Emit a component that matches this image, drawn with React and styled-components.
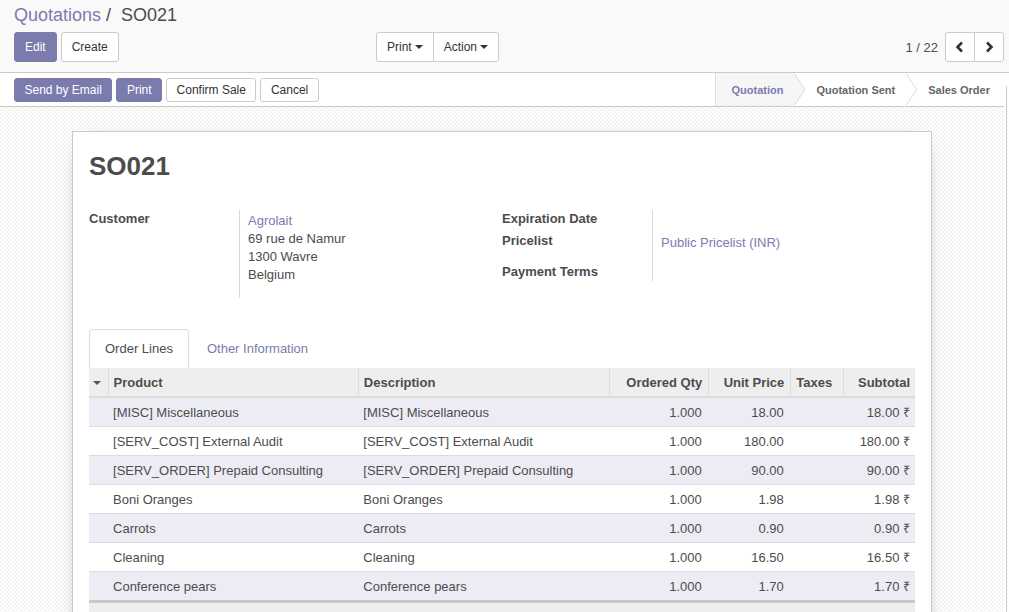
import React from "react";
import styled, { createGlobalStyle } from "styled-components";

const GlobalStyle = createGlobalStyle`
    html, body {
        margin: 0;
        padding: 0;
        height: 100%;
        overflow: hidden;
    }
    body {
        font-family: "Liberation Sans", Arial, sans-serif;
        font-size: 13px;
        color: #4c4c4c;
        background: #fff;
    }
`;

const purple = "#7c7bad";

const Page = styled.div`
    position: relative;
    height: 612px;
    display: flex;
    flex-direction: column;
`;

const ControlPanel = styled.div`
    background: #f9f9f9;
    border-bottom: 1px solid #cacaca;
    padding: 2px 5px 10px 14px;
    flex-shrink: 0;
`;

const Breadcrumb = styled.div`
    font-size: 18px;
    line-height: 26px;
    height: 28px;
    color: #4c4c4c;

    a {
        color: ${purple};
        text-decoration: none;
    }
`;

const ButtonRow = styled.div`
    display: flex;
    align-items: center;
    margin-top: 2px;
`;

const LeftButtons = styled.div`
    display: flex;
    gap: 4px;
    width: 362px;
`;

const Button = styled.button`
    font-family: inherit;
    font-size: 12px;
    height: ${(p) => (p.$small ? "24px" : "30px")};
    padding: ${(p) => (p.$small ? "0 9.5px" : "0 10px")};
    border-radius: 3px;
    border: 1px solid ${(p) => (p.$primary ? purple : "#ccc")};
    background: ${(p) => (p.$primary ? purple : "#fff")};
    color: ${(p) => (p.$primary ? "#fff" : "#333")};
    cursor: pointer;
    display: inline-flex;
    align-items: center;
    gap: 3px;
`;

const ButtonGroup = styled.div`
    display: flex;

    & > button {
        border-radius: 0;
    }
    & > button:first-child {
        border-radius: 3px 0 0 3px;
    }
    & > button:last-child {
        border-radius: 0 3px 3px 0;
        margin-left: -1px;
    }
`;

const Caret = styled.span`
    display: inline-block;
    width: 0;
    height: 0;
    border-left: 4px solid transparent;
    border-right: 4px solid transparent;
    border-top: 4px solid #333;
`;

const Pager = styled.div`
    margin-left: auto;
    display: flex;
    align-items: center;
    gap: 6px;
`;

const PagerValue = styled.span`
    font-size: 13px;
    color: #4c4c4c;
    margin-right: 1px;
`;

const PagerButton = styled(Button)`
    width: 30px;
    justify-content: center;
    padding: 0;
`;

const StatusBar = styled.div`
    display: flex;
    align-items: center;
    height: 33px;
    border-bottom: 1px solid #cacaca;
    padding-left: 14px;
    margin-right: 5px;
    flex-shrink: 0;
`;

const StatusButtons = styled.div`
    display: flex;
    gap: 4px;
`;

const StatusSteps = styled.div`
    margin-left: auto;
    display: flex;
    height: 100%;
    border-left: 1px solid #e0e0e0;
`;

const Step = styled.div`
    position: relative;
    display: flex;
    align-items: center;
    font-size: 11px;
    font-weight: bold;
    padding: 0 ${(p) => (p.$last ? "14px" : "11px")} 0 ${(p) => (p.$first ? "15px" : "22px")};
    color: ${(p) => (p.$active ? purple : "#666")};
    background: ${(p) => (p.$active ? "#f6f6f6" : "#fff")};

    ${(p) =>
        !p.$last &&
        `
    &::before, &::after {
        content: "";
        position: absolute;
        top: 0;
        height: 100%;
        width: 11px;
        clip-path: polygon(0 0, 100% 50%, 0 100%);
        z-index: 1;
    }
    &::before {
        right: -11px;
        background: #d8d8d8;
    }
    &::after {
        right: -10px;
        background: ${p.$active ? "#f6f6f6" : "#fff"};
    }
    `}
`;

const Content = styled.div`
    flex: 1;
    overflow: hidden;
    margin-right: 5px;
    background-color: #fff;
    background-image: repeating-conic-gradient(#f3f3f3 0 25%, #fff 0 50%);
    background-size: 4px 4px;
`;

const ScrollThumb = styled.div`
    position: absolute;
    right: 2px;
    top: 86px;
    bottom: 0;
    width: 1px;
    background: #c8c8c8;
`;

const Sheet = styled.div`
    width: 826px;
    margin: 24px auto 40px;
    background: #fff;
    border: 1px solid #c8c8d3;
    box-shadow: 0 5px 20px -15px #000;
    padding: 16px 16px 24px;
`;

const Title = styled.h1`
    margin: 0;
    font-size: 26px;
    line-height: 36px;
    font-weight: bold;
    color: #4c4c4c;
`;

const Groups = styled.div`
    display: grid;
    grid-template-columns: 1fr 1fr;
    margin-top: 26px;
`;

const FieldRow = styled.div`
    display: flex;
    min-height: ${(p) => p.$height || 20}px;
`;

const Label = styled.div`
    width: 150px;
    flex-shrink: 0;
    font-weight: bold;
    padding-top: ${(p) => p.$top || 0}px;
    line-height: 18px;
`;

const Value = styled.div`
    border-left: 1px solid #d8d8d8;
    padding: ${(p) => p.$top || 0}px 0 0 8px;
    line-height: 18px;
`;

const Link = styled.a`
    color: ${purple};
    text-decoration: none;
`;

const Tabs = styled.div`
    display: flex;
    margin-top: 31px;
    height: 39px;
`;

const Tab = styled.div`
    padding: 0 15px 1px;
    display: flex;
    align-items: center;
    border: 1px solid ${(p) => (p.$active ? "#ddd" : "transparent")};
    border-bottom: none;
    border-radius: 4px 4px 0 0;
    color: ${(p) => (p.$active ? "#4c4c4c" : purple)};
    margin-right: 2px;
`;

const Table = styled.table`
    width: 100%;
    border-collapse: collapse;
    table-layout: fixed;
`;

const Th = styled.th`
    background: #eee;
    height: 28px;
    padding: 0 6px 0 5px;
    text-align: ${(p) => (p.$right ? "right" : "left")};
    font-weight: bold;
    border-left: 1px solid #dcdcdc;
    border-bottom: 2px solid #dcdcdc;
    white-space: nowrap;

    &:first-child {
        border-left: none;
        padding: 0 4px;
    }
    &:last-child {
        padding-right: 5px;
    }
`;

const Tr = styled.tr`
    background: ${(p) => (p.$odd ? "#edecf5" : "#fff")};
    border-bottom: 1px solid #dcdcdc;
`;

const Td = styled.td`
    height: 28px;
    padding: 0 7px 0 5px;
    text-align: ${(p) => (p.$right ? "right" : "left")};
    white-space: nowrap;

    &:last-child {
        padding-right: 5px;
    }
`;

const FootRow = styled.tr`
    background: #eee;
    border-top: 3px solid #c8c8c8;
`;

const SortCaret = styled(Caret)`
    border-top-color: #555;
    vertical-align: middle;
`;

const lines = [
    ["[MISC] Miscellaneous", "1.000", "18.00", "18.00 ₹"],
    ["[SERV_COST] External Audit", "1.000", "180.00", "180.00 ₹"],
    ["[SERV_ORDER] Prepaid Consulting", "1.000", "90.00", "90.00 ₹"],
    ["Boni Oranges", "1.000", "1.98", "1.98 ₹"],
    ["Carrots", "1.000", "0.90", "0.90 ₹"],
    ["Cleaning", "1.000", "16.50", "16.50 ₹"],
    ["Conference pears", "1.000", "1.70", "1.70 ₹"],
];

const ChevronLeft = () => (
    <svg width="10" height="12" viewBox="0 0 10 12">
        <path d="M7 1.5 L2.5 6 L7 10.5" stroke="#333" strokeWidth="2.6" fill="none" />
    </svg>
);

const ChevronRight = () => (
    <svg width="10" height="12" viewBox="0 0 10 12">
        <path d="M3 1.5 L7.5 6 L3 10.5" stroke="#333" strokeWidth="2.6" fill="none" />
    </svg>
);

const App = () => {
    return (
        <Page>
            <GlobalStyle />
            <ControlPanel>
                <Breadcrumb>
                    <a href="#">Quotations</a> /&nbsp; SO021
                </Breadcrumb>
                <ButtonRow>
                    <LeftButtons>
                        <Button $primary>Edit</Button>
                        <Button>Create</Button>
                    </LeftButtons>
                    <ButtonGroup>
                        <Button>
                            Print <Caret />
                        </Button>
                        <Button>
                            Action <Caret />
                        </Button>
                    </ButtonGroup>
                    <Pager>
                        <PagerValue>1 / 22</PagerValue>
                        <ButtonGroup>
                            <PagerButton>
                                <ChevronLeft />
                            </PagerButton>
                            <PagerButton>
                                <ChevronRight />
                            </PagerButton>
                        </ButtonGroup>
                    </Pager>
                </ButtonRow>
            </ControlPanel>

            <StatusBar>
                <StatusButtons>
                    <Button $primary $small>Send by Email</Button>
                    <Button $primary $small>Print</Button>
                    <Button $small>Confirm Sale</Button>
                    <Button $small>Cancel</Button>
                </StatusButtons>
                <StatusSteps>
                    <Step $first $active>Quotation</Step>
                    <Step>Quotation Sent</Step>
                    <Step $last>Sales Order</Step>
                </StatusSteps>
            </StatusBar>

            <Content>
                <Sheet>
                    <Title>SO021</Title>
                    <Groups>
                        <div>
                            <FieldRow $height={88}>
                                <Label>Customer</Label>
                                <Value $top={2}>
                                    <Link href="#">Agrolait</Link>
                                    <br />
                                    69 rue de Namur
                                    <br />
                                    1300 Wavre
                                    <br />
                                    Belgium
                                </Value>
                            </FieldRow>
                        </div>
                        <div>
                            <FieldRow $height={20}>
                                <Label>Expiration Date</Label>
                                <Value />
                            </FieldRow>
                            <FieldRow $height={25}>
                                <Label $top={2}>Pricelist</Label>
                                <Value $top={4}>
                                    <Link href="#">Public Pricelist (INR)</Link>
                                </Value>
                            </FieldRow>
                            <FieldRow $height={25}>
                                <Label $top={8}>Payment Terms</Label>
                                <Value />
                            </FieldRow>
                        </div>
                    </Groups>

                    <Tabs>
                        <Tab $active>Order Lines</Tab>
                        <Tab>Other Information</Tab>
                    </Tabs>
                    <Table>
                        <colgroup>
                            <col style={{ width: 19 }} />
                            <col style={{ width: 250 }} />
                            <col style={{ width: 251 }} />
                            <col style={{ width: 99 }} />
                            <col style={{ width: 82 }} />
                            <col style={{ width: 53 }} />
                            <col style={{ width: 71 }} />
                        </colgroup>
                        <thead>
                            <tr>
                                <Th>
                                    <SortCaret />
                                </Th>
                                <Th>Product</Th>
                                <Th>Description</Th>
                                <Th $right>Ordered Qty</Th>
                                <Th $right>Unit Price</Th>
                                <Th>Taxes</Th>
                                <Th $right>Subtotal</Th>
                            </tr>
                        </thead>
                        <tbody>
                            {lines.map(([name, qty, price, subtotal], i) => (
                                <Tr key={name} $odd={i % 2 === 0}>
                                    <Td />
                                    <Td>{name}</Td>
                                    <Td>{name}</Td>
                                    <Td $right>{qty}</Td>
                                    <Td $right>{price}</Td>
                                    <Td />
                                    <Td $right>{subtotal}</Td>
                                </Tr>
                            ))}
                        </tbody>
                        <tfoot>
                            <FootRow>
                                <Td colSpan={7} />
                            </FootRow>
                        </tfoot>
                    </Table>
                </Sheet>
            </Content>
            <ScrollThumb />
        </Page>
    );
};

export default App;
